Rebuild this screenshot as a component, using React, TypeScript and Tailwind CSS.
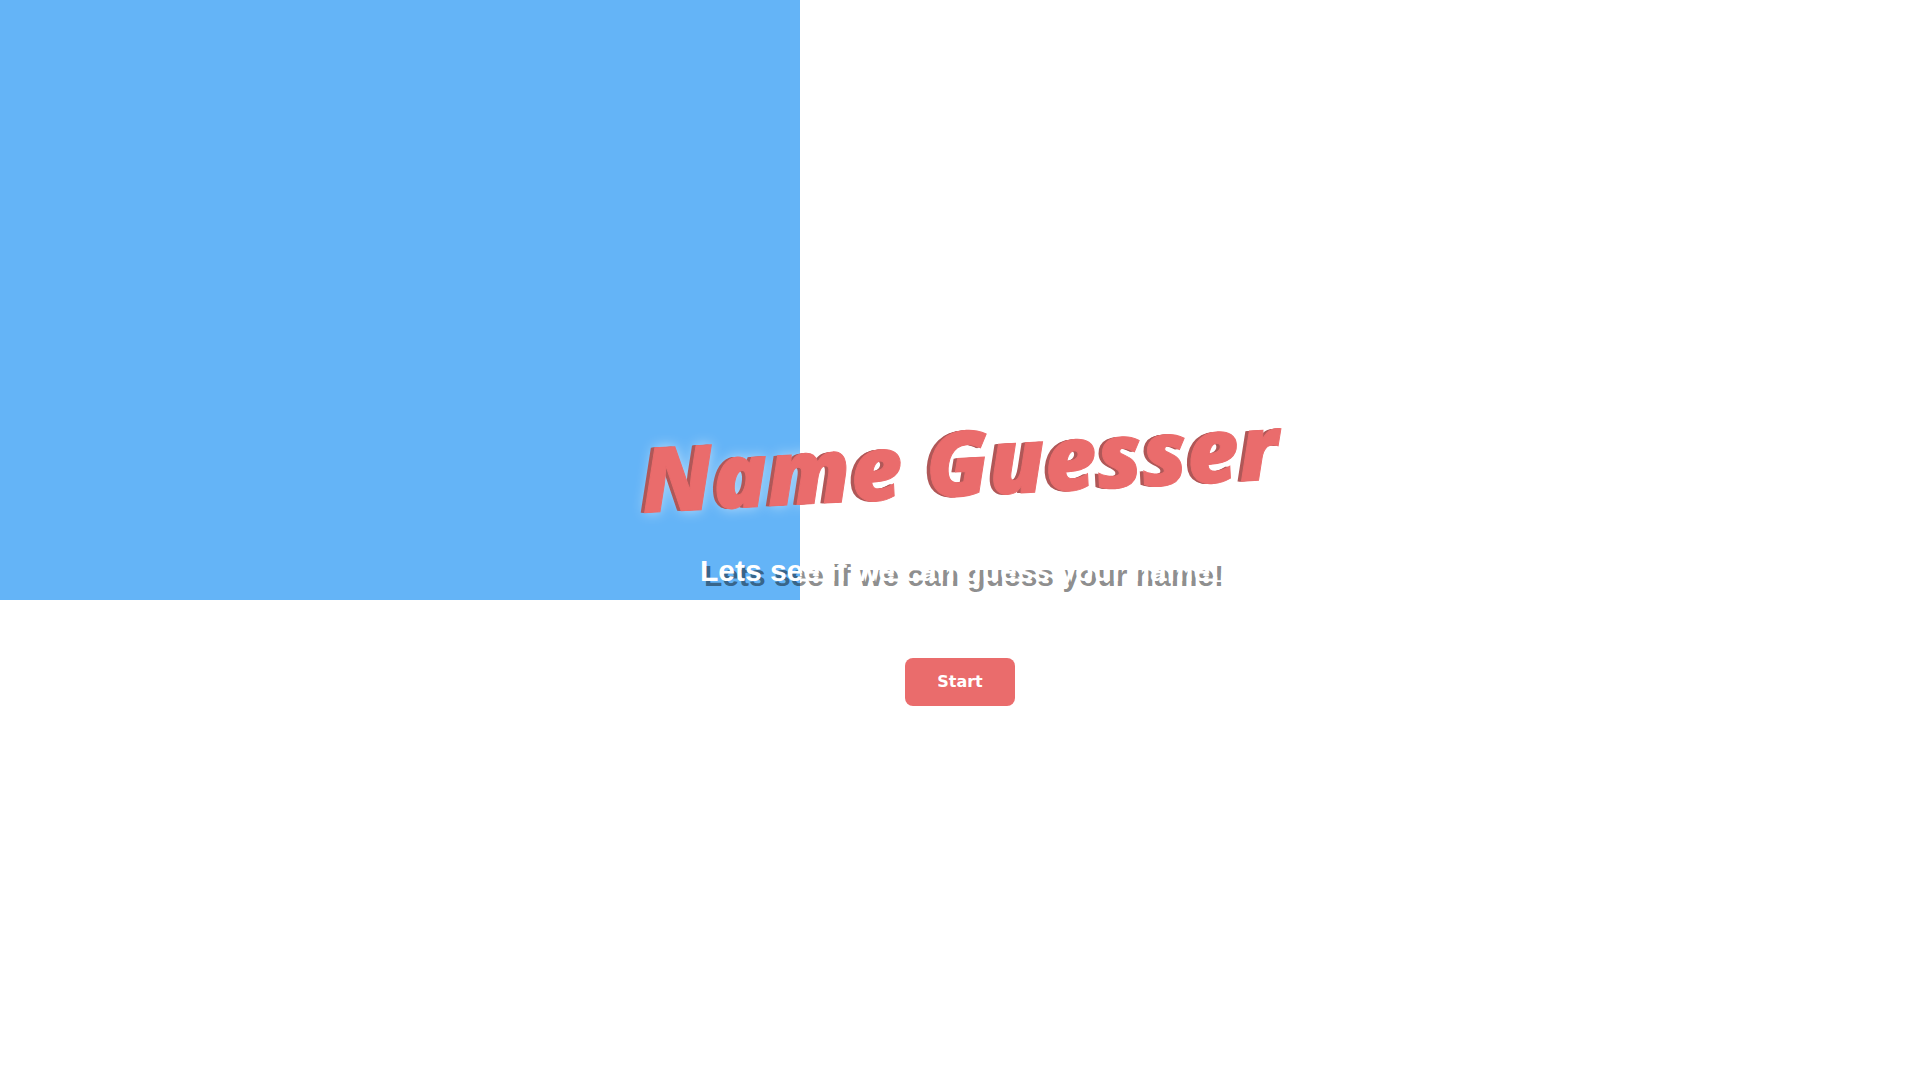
function Title() {
  return (
    <h1 className="-rotate-3 whitespace-nowrap font-['Open_Sans',sans-serif] text-[90px] leading-[120px] font-extrabold italic text-[#ea6c6c] [-webkit-text-stroke:1px_#ea6c6c] [text-shadow:-2px_0_0_#b05858,-3px_0_0_#b05858,-4px_0_0_#b05858,0_0_14px_rgba(255,255,255,0.6)]">
      Name Guesser
    </h1>
  )
}

export default function App() {
  return (
    <div className="relative min-h-screen bg-white">
      <div className="absolute top-0 left-0 h-[600px] w-[800px] bg-[#64b4f7]" aria-hidden="true" />
      <main className="relative flex min-h-screen flex-col items-center pt-[401px]">
        <Title />
        <h2 className="mt-8 text-center font-['Liberation_Sans',sans-serif] text-[30px] leading-9 font-bold text-white [text-shadow:4px_5px_0_rgba(0,0,0,0.45)]">
          Lets see if we can guess your name!
        </h2>
        <button
          type="button"
          className="mt-[69px] h-12 cursor-pointer rounded-lg bg-[#ea6c6c] px-8 font-['DejaVu_Sans',sans-serif] text-base font-bold text-white hover:bg-[#dd5f5f]"
        >
          Start
        </button>
      </main>
    </div>
  )
}
